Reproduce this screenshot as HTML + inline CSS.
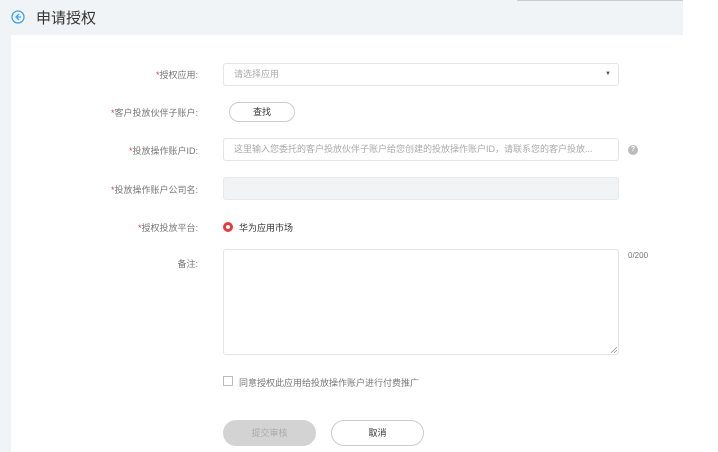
<!DOCTYPE html>
<html><head><meta charset="utf-8"><style>
body{margin:0;width:718px;height:452px;background:#fff;font-family:"Liberation Sans","Noto Sans CJK SC",sans-serif;position:relative;overflow:hidden;color:#777;font-size:9px}
.a{position:absolute}
.gray{background:#f1f4f7}
.lbl{position:absolute;right:520px;text-align:right;font-size:9px;color:#777;white-space:nowrap}
.lbl b{color:#e53e3e;font-weight:normal}
.inp{position:absolute;left:223px;width:396px;height:23px;border:1px solid #e4e4e4;border-radius:3px;box-sizing:border-box;background:#fff;font-size:9px;color:#aaa;line-height:21px;padding-left:10px;white-space:nowrap;overflow:hidden}
</style></head><body>
<div class="a gray" style="left:0;top:0;width:683px;height:35px"></div>
<div class="a gray" style="left:0;top:35px;width:11px;height:417px"></div>
<div class="a" style="left:517px;top:0;width:166px;height:1px;background:#ccc"></div>
<svg class="a" style="left:11px;top:10px" width="14" height="14" viewBox="0 0 14 14"><circle cx="7" cy="7" r="6" fill="none" stroke="#3ba4ec" stroke-width="1.3"/><path d="M8 4L5 7L8 10M5 7H10" fill="none" stroke="#3ba4ec" stroke-width="1.3"/></svg>
<div class="a" style="left:36px;top:7px;font-size:15px;color:#333">申请授权</div>

<div class="lbl" style="top:68px"><b>*</b>授权应用:</div>
<div class="inp" style="top:63px">请选择应用<span style="position:absolute;right:7px;top:0;color:#555;font-size:6px">▼</span></div>

<div class="lbl" style="top:106px"><b>*</b>客户投放伙伴子账户:</div>
<div class="a" style="left:229px;top:102px;width:66px;height:20px;border:1px solid #ccc;border-radius:11px;box-sizing:border-box;text-align:center;line-height:18px;color:#333">查找</div>

<div class="lbl" style="top:144px"><b>*</b>投放操作账户ID:</div>
<div class="inp" style="top:138px">这里输入您委托的客户投放伙伴子账户给您创建的投放操作账户ID，请联系您的客户投放...</div>
<div class="a" style="left:628px;top:145px;width:10px;height:10px;border-radius:50%;background:#bbb;color:#fff;font-size:7px;text-align:center;line-height:10px;font-weight:bold">?</div>

<div class="lbl" style="top:183px"><b>*</b>投放操作账户公司名:</div>
<div class="inp" style="top:177px;background:#f1f3f5;border-color:#e8e8e8"></div>

<div class="lbl" style="top:221px"><b>*</b>授权投放平台:</div>
<div class="a" style="left:223px;top:222px;width:10px;height:10px;border-radius:50%;border:3px solid #e53e3e;box-sizing:border-box"></div>
<div class="a" style="left:239px;top:221px;color:#333">华为应用市场</div>

<div class="lbl" style="top:257px">备注:</div>
<div class="inp" style="top:249px;height:106px"></div>
<svg class="a" style="left:611px;top:347px" width="6" height="6"><path d="M0 6L6 0M3 6L6 3" stroke="#999" stroke-width="0.8"/></svg>
<div class="a" style="left:628px;top:251px;font-size:8px">0/200</div>

<div class="a" style="left:223px;top:376px;width:10px;height:10px;border:1px solid #bbb;box-sizing:border-box"></div>
<div class="a" style="left:239px;top:376px">同意授权此应用给投放操作账户进行付费推广</div>

<div class="a" style="left:223px;top:420px;width:93px;height:26px;border-radius:13px;background:#d3d3d3;color:#aaa;text-align:center;line-height:26px">提交审核</div>
<div class="a" style="left:331px;top:420px;width:93px;height:26px;border-radius:13px;border:1px solid #ccc;box-sizing:border-box;color:#333;text-align:center;line-height:24px">取消</div>
</body></html>
